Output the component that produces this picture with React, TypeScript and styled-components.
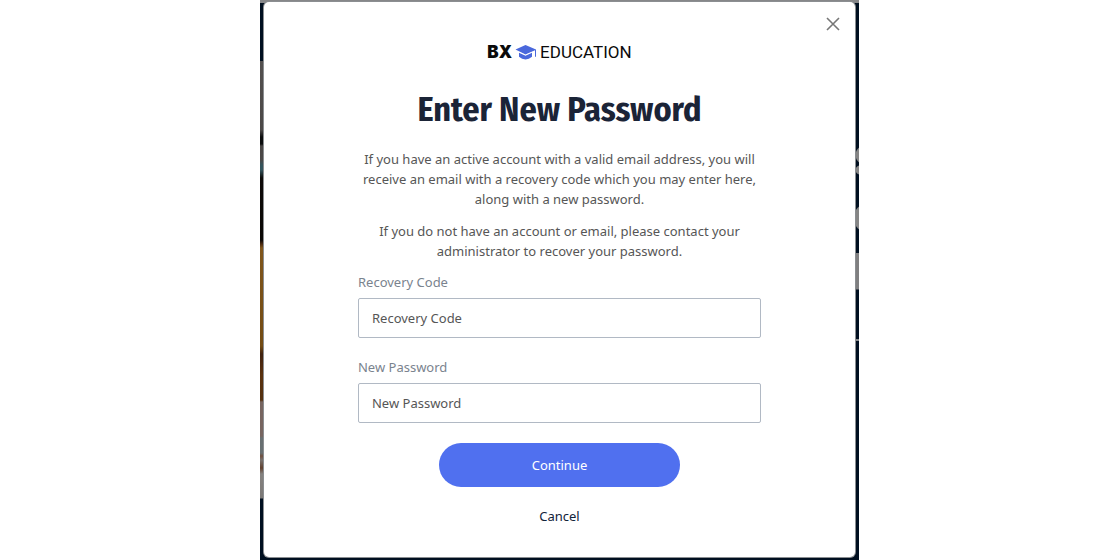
import React from "react";
import styled, { createGlobalStyle } from "styled-components";

const GlobalStyle = createGlobalStyle`
  *, *::before, *::after { box-sizing: border-box; }
  body {
    margin: 0;
    background: #fff;
    font-family: "Noto Sans", sans-serif;
    font-size: 13px;
    line-height: 19px;
    color: #565656;
  }
`;

const Page = styled.main`
  display: flex;
  justify-content: center;
  min-height: 100vh;
  padding-right: 1px;
`;

const Backdrop = styled.div`
  display: flex;
  width: 100%;
  max-width: 599px;
  padding: 2px 4px 3px;
  background:
    linear-gradient(#868789, #868789) top / 100% 3px no-repeat,
    linear-gradient(
      #000f20 61px, #53504f 61px, #4b4847 130px, #0b0c0d 137px, #0b0c0d 144px,
      #4a4645 146px, #4a4848 160px, #34545c 165px, #34545c 170px, #0d0a08 178px,
      #0a0705 240px, #4a2a10 244px, #80561c 248px, #734b13 346px, #40220f 354px,
      #5a310e 375px, #54300f 400px, #776560 402px, #776560 436px, #686f71 438px,
      #686f71 453px, #70503f 456px, #77716e 460px, #60402f 468px, #858280 474px,
      #7b7876 498px, #000f20 499px
    ) left / 4px 100% no-repeat,
    radial-gradient(circle at 10px 155px, #858585 9px, transparent 10px) right top / 4px 100% no-repeat,
    radial-gradient(circle at 5px 170px, #858585 4px, transparent 5px) right top / 4px 100% no-repeat,
    radial-gradient(circle at 13px 218px, #858585 14px, transparent 15px) right top / 4px 100% no-repeat,
    linear-gradient(
      transparent 253px, #7f7f80 253px, #7f7f80 289px, transparent 290px,
      transparent 339px, #85878a 339px, #85878a 341px, transparent 341px
    ) right / 4px 100% no-repeat,
    #000f20;
`;

const Dialog = styled.section`
  position: relative;
  display: flex;
  flex-direction: column;
  align-items: center;
  width: 100%;
  padding: 39px 15.9% 30px;
  background: #fff;
  border-radius: 5px;
  box-shadow: 0 0 0 1px #8b8e91;
`;

const CloseButton = styled.button`
  position: absolute;
  top: 12px;
  right: 12px;
  display: grid;
  place-items: center;
  width: 20px;
  height: 20px;
  padding: 0;
  border: 0;
  background: none;
  color: #777;
  cursor: pointer;
`;

const Logo = styled.div`
  display: flex;
  align-items: center;
  height: 22px;
  color: #0b0b0b;
`;

const LogoMark = styled.span`
  font: 900 17px/22px Inter, sans-serif;
`;

const LogoCap = styled.svg`
  width: 22px;
  height: 16px;
  margin: 0 3px;
`;

const LogoName = styled.span`
  font: 400 17px/22px Roboto, sans-serif;
`;

const Title = styled.h1`
  margin: 27px 0 19px;
  font: 700 34px/40px "Fira Sans Condensed", "Liberation Sans Narrow", sans-serif;
  color: #1b2437;
  text-align: center;
`;

const Copy = styled.p`
  margin: 0 0 12px;
  line-height: 20px;
  text-align: center;
`;

const Form = styled.form`
  display: flex;
  flex-direction: column;
  align-items: center;
  width: 100%;
`;

const Field = styled.div`
  display: flex;
  flex-direction: column;
  gap: 6px;
  width: 100%;
  margin-bottom: 20px;
`;

const Label = styled.label`
  color: #7a838e;
`;

const Input = styled.input`
  width: 100%;
  height: 40px;
  padding: 0 13px;
  border: 1px solid #b1b9c4;
  border-radius: 2px;
  background: #fff;
  font: inherit;
  color: #565656;

  &::placeholder {
    color: #565656;
    opacity: 1;
  }
`;

const SubmitButton = styled.button`
  width: 60%;
  height: 44px;
  border: 0;
  border-radius: 22px;
  background: #5070ef;
  color: #fff;
  font: inherit;
  cursor: pointer;
`;

const CancelButton = styled.button`
  margin-top: 20px;
  padding: 0;
  border: 0;
  background: none;
  color: #12233a;
  font: inherit;
  cursor: pointer;
`;

export default function App() {
  return (
    <>
      <GlobalStyle />
      <Page>
        <Backdrop>
          <Dialog role="dialog" aria-labelledby="dialog-title">
            <CloseButton type="button" aria-label="Close">
              <svg width="14" height="14" viewBox="0 0 14 14" fill="none" stroke="currentColor" strokeWidth="1.6">
                <path d="M1 1l12 12M13 1L1 13" />
              </svg>
            </CloseButton>
            <Logo>
              <LogoMark>BX</LogoMark>
              <LogoCap viewBox="0 0 22 16" aria-hidden="true">
                <path fill="#4a68dc" d="M10.5 1L21 5.6v7.2h-1V6.2l-9.5 4.2L.5 5.6z" />
                <path fill="#4a68dc" d="M4 8.6l6.5 3 6.5-3v4.2q-3 2.6-6.5 2.6T4 12.8z" />
                <path fill="none" stroke="#fff" strokeWidth=".8" d="M3.5 8.1l7 3.1 7-3.1" />
              </LogoCap>
              <LogoName>EDUCATION</LogoName>
            </Logo>
            <Title id="dialog-title">Enter New Password</Title>
            <Copy>
              If you have an active account with a valid email address, you will receive an email
              with a recovery code which you may enter here, along with a new password.
            </Copy>
            <Copy>
              If you do not have an account or email, please contact your administrator to recover
              your password.
            </Copy>
            <Form onSubmit={(event) => event.preventDefault()}>
              <Field>
                <Label htmlFor="recovery-code">Recovery Code</Label>
                <Input id="recovery-code" type="text" placeholder="Recovery Code" />
              </Field>
              <Field>
                <Label htmlFor="new-password">New Password</Label>
                <Input id="new-password" type="password" placeholder="New Password" />
              </Field>
              <SubmitButton type="submit">Continue</SubmitButton>
              <CancelButton type="button">Cancel</CancelButton>
            </Form>
          </Dialog>
        </Backdrop>
      </Page>
    </>
  );
}
